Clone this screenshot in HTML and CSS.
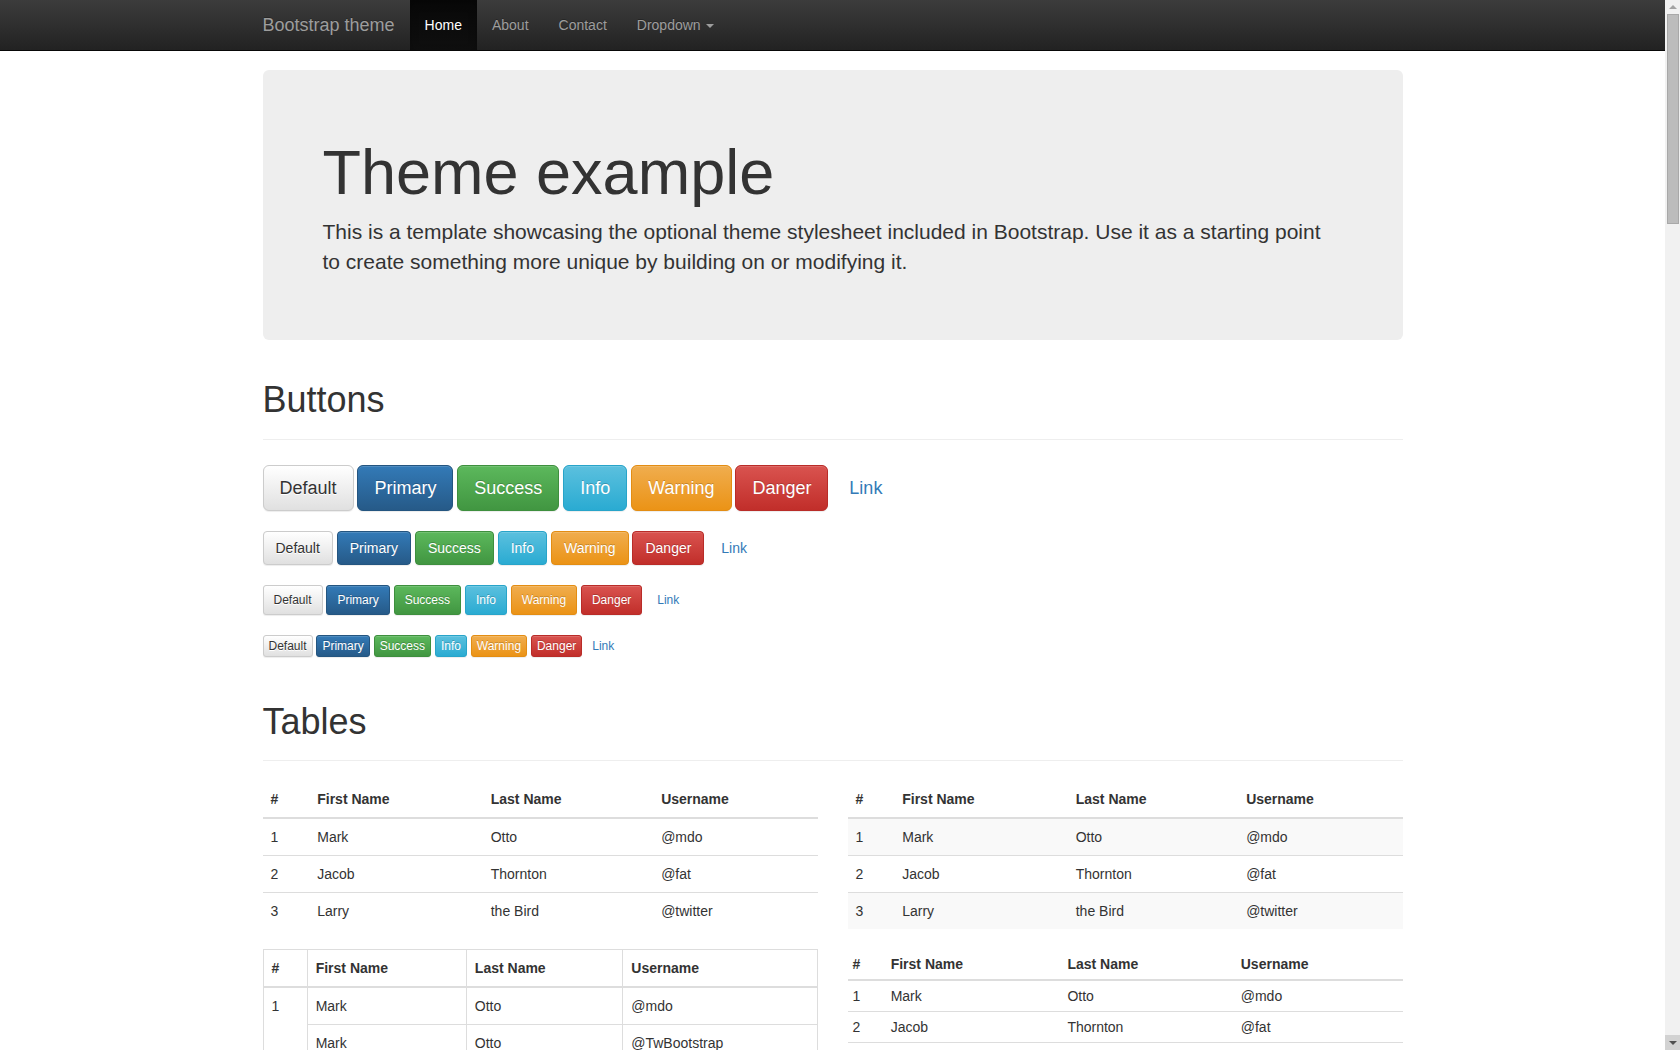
FILE: index.html
```html
<!DOCTYPE html>
<html lang="en">
<head>
<meta charset="utf-8">
<title>Theme Template for Bootstrap</title>
<link rel="stylesheet" href="styles.css">
</head>
<body>
<nav class="navbar navbar-inverse navbar-fixed">
  <div class="container nav-inner">
    <a class="navbar-brand" href="#">Bootstrap theme</a>
    <ul class="navbar-nav">
      <li class="active"><a href="#">Home</a></li>
      <li><a href="#about">About</a></li>
      <li><a href="#contact">Contact</a></li>
      <li><a href="#">Dropdown <span class="caret"></span></a></li>
    </ul>
  </div>
</nav>

<div class="fake-scrollbar" aria-hidden="true">
  <div class="sb-btn sb-up"><span class="sb-tri-up"></span></div>
  <div class="sb-thumb"></div>
  <div class="sb-track"></div>
  <div class="sb-btn sb-down"><span class="sb-tri-down"></span></div>
</div>

<div class="container theme-showcase">
  <div class="jumbotron">
    <h1>Theme example</h1>
    <p>This is a template showcasing the optional theme stylesheet included in Bootstrap. Use it as a starting point to create something more unique by building on or modifying it.</p>
  </div>

  <div class="page-header"><h1>Buttons</h1></div>
  <p class="btn-row">
    <button type="button" class="btn btn-lg btn-default">Default</button>
    <button type="button" class="btn btn-lg btn-primary">Primary</button>
    <button type="button" class="btn btn-lg btn-success">Success</button>
    <button type="button" class="btn btn-lg btn-info">Info</button>
    <button type="button" class="btn btn-lg btn-warning">Warning</button>
    <button type="button" class="btn btn-lg btn-danger">Danger</button>
    <button type="button" class="btn btn-lg btn-link">Link</button>
  </p>
  <p class="btn-row">
    <button type="button" class="btn btn-default">Default</button>
    <button type="button" class="btn btn-primary">Primary</button>
    <button type="button" class="btn btn-success">Success</button>
    <button type="button" class="btn btn-info">Info</button>
    <button type="button" class="btn btn-warning">Warning</button>
    <button type="button" class="btn btn-danger">Danger</button>
    <button type="button" class="btn btn-link">Link</button>
  </p>
  <p class="btn-row">
    <button type="button" class="btn btn-sm btn-default">Default</button>
    <button type="button" class="btn btn-sm btn-primary">Primary</button>
    <button type="button" class="btn btn-sm btn-success">Success</button>
    <button type="button" class="btn btn-sm btn-info">Info</button>
    <button type="button" class="btn btn-sm btn-warning">Warning</button>
    <button type="button" class="btn btn-sm btn-danger">Danger</button>
    <button type="button" class="btn btn-sm btn-link">Link</button>
  </p>
  <p class="btn-row">
    <button type="button" class="btn btn-xs btn-default">Default</button>
    <button type="button" class="btn btn-xs btn-primary">Primary</button>
    <button type="button" class="btn btn-xs btn-success">Success</button>
    <button type="button" class="btn btn-xs btn-info">Info</button>
    <button type="button" class="btn btn-xs btn-warning">Warning</button>
    <button type="button" class="btn btn-xs btn-danger">Danger</button>
    <button type="button" class="btn btn-xs btn-link">Link</button>
  </p>

  <div class="page-header"><h1>Tables</h1></div>
  <div class="row">
    <div class="col-6">
      <table class="table">
        <thead><tr><th>#</th><th>First Name</th><th>Last Name</th><th>Username</th></tr></thead>
        <tbody>
          <tr><td>1</td><td>Mark</td><td>Otto</td><td>@mdo</td></tr>
          <tr><td>2</td><td>Jacob</td><td>Thornton</td><td>@fat</td></tr>
          <tr><td>3</td><td>Larry</td><td>the Bird</td><td>@twitter</td></tr>
        </tbody>
      </table>
    </div>
    <div class="col-6">
      <table class="table table-striped">
        <thead><tr><th>#</th><th>First Name</th><th>Last Name</th><th>Username</th></tr></thead>
        <tbody>
          <tr><td>1</td><td>Mark</td><td>Otto</td><td>@mdo</td></tr>
          <tr><td>2</td><td>Jacob</td><td>Thornton</td><td>@fat</td></tr>
          <tr><td>3</td><td>Larry</td><td>the Bird</td><td>@twitter</td></tr>
        </tbody>
      </table>
    </div>
  </div>
  <div class="row">
    <div class="col-6">
      <table class="table table-bordered">
        <thead><tr><th>#</th><th>First Name</th><th>Last Name</th><th>Username</th></tr></thead>
        <tbody>
          <tr><td rowspan="2">1</td><td>Mark</td><td>Otto</td><td>@mdo</td></tr>
          <tr><td>Mark</td><td>Otto</td><td>@TwBootstrap</td></tr>
          <tr><td>2</td><td>Jacob</td><td>Thornton</td><td>@fat</td></tr>
          <tr><td>3</td><td colspan="2">Larry the Bird</td><td>@twitter</td></tr>
        </tbody>
      </table>
    </div>
    <div class="col-6">
      <table class="table table-condensed">
        <thead><tr><th>#</th><th>First Name</th><th>Last Name</th><th>Username</th></tr></thead>
        <tbody>
          <tr><td>1</td><td>Mark</td><td>Otto</td><td>@mdo</td></tr>
          <tr><td>2</td><td>Jacob</td><td>Thornton</td><td>@fat</td></tr>
          <tr><td>3</td><td colspan="2">Larry the Bird</td><td>@twitter</td></tr>
        </tbody>
      </table>
    </div>
  </div>

  <div class="page-header"><h1>Thumbnails</h1></div>
  <div class="img-thumbnail"><div class="holder">200x200</div></div>

  <div class="page-header"><h1>Labels</h1></div>
  <h1 class="lbl-h">
    <span class="label label-default">Default</span>
    <span class="label label-primary">Primary</span>
    <span class="label label-success">Success</span>
    <span class="label label-info">Info</span>
    <span class="label label-warning">Warning</span>
    <span class="label label-danger">Danger</span>
  </h1>
  <h2 class="lbl-h">
    <span class="label label-default">Default</span>
    <span class="label label-primary">Primary</span>
    <span class="label label-success">Success</span>
    <span class="label label-info">Info</span>
    <span class="label label-warning">Warning</span>
    <span class="label label-danger">Danger</span>
  </h2>
  <h3 class="lbl-h">
    <span class="label label-default">Default</span>
    <span class="label label-primary">Primary</span>
    <span class="label label-success">Success</span>
    <span class="label label-info">Info</span>
    <span class="label label-warning">Warning</span>
    <span class="label label-danger">Danger</span>
  </h3>
  <h4 class="lbl-h">
    <span class="label label-default">Default</span>
    <span class="label label-primary">Primary</span>
    <span class="label label-success">Success</span>
    <span class="label label-info">Info</span>
    <span class="label label-warning">Warning</span>
    <span class="label label-danger">Danger</span>
  </h4>
  <h5 class="lbl-h">
    <span class="label label-default">Default</span>
    <span class="label label-primary">Primary</span>
    <span class="label label-success">Success</span>
    <span class="label label-info">Info</span>
    <span class="label label-warning">Warning</span>
    <span class="label label-danger">Danger</span>
  </h5>
  <h6 class="lbl-h">
    <span class="label label-default">Default</span>
    <span class="label label-primary">Primary</span>
    <span class="label label-success">Success</span>
    <span class="label label-info">Info</span>
    <span class="label label-warning">Warning</span>
    <span class="label label-danger">Danger</span>
  </h6>

  <div class="page-header"><h1>Badges</h1></div>
  <p><a href="#" class="link">Inbox <span class="badge">42</span></a></p>
  <ul class="nav nav-pills">
    <li class="active"><a href="#">Home <span class="badge">42</span></a></li>
    <li><a href="#">Profile</a></li>
    <li><a href="#">Messages <span class="badge">3</span></a></li>
  </ul>

  <div class="page-header"><h1>Dropdown menus</h1></div>
  <div class="theme-dropdown">
    <ul class="dropdown-menu">
      <li class="active"><a href="#">Action</a></li>
      <li><a href="#">Another action</a></li>
      <li><a href="#">Something else here</a></li>
      <li class="divider"></li>
      <li><a href="#">Separated link</a></li>
    </ul>
  </div>

  <div class="page-header"><h1>Navs</h1></div>
  <ul class="nav nav-tabs">
    <li class="active"><a href="#">Home</a></li>
    <li><a href="#">Profile</a></li>
    <li><a href="#">Messages</a></li>
  </ul>
  <ul class="nav nav-pills">
    <li class="active"><a href="#">Home</a></li>
    <li><a href="#">Profile</a></li>
    <li><a href="#">Messages</a></li>
  </ul>

  <div class="page-header"><h1>Navbars</h1></div>
  <nav class="navbar navbar-default navbar-box">
    <div class="nav-inner">
      <a class="navbar-brand" href="#">Project name</a>
      <ul class="navbar-nav">
        <li class="active"><a href="#">Home</a></li>
        <li><a href="#">About</a></li>
        <li><a href="#">Contact</a></li>
        <li><a href="#">Dropdown <span class="caret"></span></a></li>
      </ul>
    </div>
  </nav>
  <nav class="navbar navbar-inverse navbar-box">
    <div class="nav-inner">
      <a class="navbar-brand" href="#">Project name</a>
      <ul class="navbar-nav">
        <li class="active"><a href="#">Home</a></li>
        <li><a href="#">About</a></li>
        <li><a href="#">Contact</a></li>
        <li><a href="#">Dropdown <span class="caret"></span></a></li>
      </ul>
    </div>
  </nav>

  <div class="page-header"><h1>Alerts</h1></div>
  <div class="alert alert-success"><strong>Well done!</strong> You successfully read this important alert message.</div>
  <div class="alert alert-info"><strong>Heads up!</strong> This alert needs your attention, but it's not super important.</div>
  <div class="alert alert-warning"><strong>Warning!</strong> Best check yo self, you're not looking too good.</div>
  <div class="alert alert-danger"><strong>Oh snap!</strong> Change a few things up and try submitting again.</div>

  <div class="page-header"><h1>Progress bars</h1></div>
  <div class="progress"><div class="progress-bar" style="width: 60%"><span class="sr-only">60% Complete</span></div></div>
  <div class="progress"><div class="progress-bar progress-bar-success" style="width: 40%"><span class="sr-only">40% Complete (success)</span></div></div>
  <div class="progress"><div class="progress-bar progress-bar-info" style="width: 20%"><span class="sr-only">20% Complete</span></div></div>
  <div class="progress"><div class="progress-bar progress-bar-warning" style="width: 60%"><span class="sr-only">60% Complete (warning)</span></div></div>
  <div class="progress"><div class="progress-bar progress-bar-danger" style="width: 80%"><span class="sr-only">80% Complete (danger)</span></div></div>
  <div class="progress">
    <div class="progress-bar progress-bar-success" style="width: 35%"><span class="sr-only">35% Complete (success)</span></div>
    <div class="progress-bar progress-bar-warning" style="width: 20%"><span class="sr-only">20% Complete (warning)</span></div>
    <div class="progress-bar progress-bar-danger" style="width: 10%"><span class="sr-only">10% Complete (danger)</span></div>
  </div>

  <div class="page-header"><h1>List groups</h1></div>
  <div class="row">
    <div class="col-4">
      <ul class="list-group">
        <li class="list-group-item">Cras justo odio</li>
        <li class="list-group-item">Dapibus ac facilisis in</li>
        <li class="list-group-item">Morbi leo risus</li>
        <li class="list-group-item">Porta ac consectetur ac</li>
        <li class="list-group-item">Vestibulum at eros</li>
      </ul>
    </div>
    <div class="col-4">
      <div class="list-group">
        <a href="#" class="list-group-item active">Cras justo odio</a>
        <a href="#" class="list-group-item">Dapibus ac facilisis in</a>
        <a href="#" class="list-group-item">Morbi leo risus</a>
        <a href="#" class="list-group-item">Porta ac consectetur ac</a>
        <a href="#" class="list-group-item">Vestibulum at eros</a>
      </div>
    </div>
    <div class="col-4">
      <div class="list-group">
        <a href="#" class="list-group-item active">
          <h4 class="list-group-item-heading">List group item heading</h4>
          <p class="list-group-item-text">Donec id elit non mi porta gravida at eget metus. Maecenas sed diam eget risus varius blandit.</p>
        </a>
        <a href="#" class="list-group-item">
          <h4 class="list-group-item-heading">List group item heading</h4>
          <p class="list-group-item-text">Donec id elit non mi porta gravida at eget metus. Maecenas sed diam eget risus varius blandit.</p>
        </a>
        <a href="#" class="list-group-item">
          <h4 class="list-group-item-heading">List group item heading</h4>
          <p class="list-group-item-text">Donec id elit non mi porta gravida at eget metus. Maecenas sed diam eget risus varius blandit.</p>
        </a>
      </div>
    </div>
  </div>

  <div class="page-header"><h1>Panels</h1></div>
  <div class="row">
    <div class="col-4">
      <div class="panel panel-default"><div class="panel-heading"><h3 class="panel-title">Panel title</h3></div><div class="panel-body">Panel content</div></div>
      <div class="panel panel-primary"><div class="panel-heading"><h3 class="panel-title">Panel title</h3></div><div class="panel-body">Panel content</div></div>
    </div>
    <div class="col-4">
      <div class="panel panel-success"><div class="panel-heading"><h3 class="panel-title">Panel title</h3></div><div class="panel-body">Panel content</div></div>
      <div class="panel panel-info"><div class="panel-heading"><h3 class="panel-title">Panel title</h3></div><div class="panel-body">Panel content</div></div>
    </div>
    <div class="col-4">
      <div class="panel panel-warning"><div class="panel-heading"><h3 class="panel-title">Panel title</h3></div><div class="panel-body">Panel content</div></div>
      <div class="panel panel-danger"><div class="panel-heading"><h3 class="panel-title">Panel title</h3></div><div class="panel-body">Panel content</div></div>
    </div>
  </div>

  <div class="page-header"><h1>Wells</h1></div>
  <div class="well">
    <p>Sed diam eget risus varius blandit sit amet non magna. Maecenas faucibus mollis interdum. Donec ullamcorper nulla non metus auctor fringilla. Aenean lacinia bibendum nulla sed consectetur.</p>
  </div>

  <div class="page-header"><h1>Carousel</h1></div>
  <div class="carousel">
    <div class="carousel-slide">First slide</div>
    <ol class="carousel-indicators">
      <li class="active"></li><li></li><li></li>
    </ol>
    <a class="carousel-control left" href="#">&#8249;</a>
    <a class="carousel-control right" href="#">&#8250;</a>
  </div>
</div>
</body>
</html>
```

FILE: styles.css
```css
* { box-sizing: border-box; }
html { font-size: 10px; }
body {
  margin: 0;
  padding-top: 70px;
  padding-bottom: 30px;
  padding-right: 15px;
  font-family: "Liberation Sans", Arial, sans-serif;
  font-size: 14px;
  line-height: 1.42857143;
  color: #333;
  background: #fff;
}
a { color: #337ab7; text-decoration: none; }
h1, h2, h3, h4, h5, h6 { font-family: inherit; font-weight: 500; line-height: 1.1; color: inherit; }
h1, h2, h3 { margin-top: 20px; margin-bottom: 10px; }
h4, h5, h6 { margin-top: 10px; margin-bottom: 10px; }
h1 { font-size: 36px; }
h2 { font-size: 30px; }
h3 { font-size: 24px; }
h4 { font-size: 18px; }
h5 { font-size: 14px; }
h6 { font-size: 12px; }
p { margin: 0 0 10px; }
ul, ol { margin: 0; padding: 0; list-style: none; }

.container { width: 1170px; margin: 0 auto; padding: 0 15px; }
.row { display: flex; margin: 0 -15px; }
.col-6 { width: 50%; padding: 0 15px; }
.col-4 { width: 33.3333%; padding: 0 15px; }

/* Browser scrollbar as seen in the screenshot */
.fake-scrollbar {
  position: fixed;
  top: 0; right: 0; bottom: 0;
  width: 15px;
  z-index: 2000;
  background: #f1f1f1;
  display: flex;
  flex-direction: column;
}
.sb-btn { height: 15px; flex: none; display: flex; align-items: center; justify-content: center; }
.sb-up { height: 14px; }
.sb-down { background: #d2d2d2; }
.sb-tri-up {
  width: 0; height: 0;
  border-left: 4px solid transparent;
  border-right: 4px solid transparent;
  border-bottom: 4px solid #a3a3a3;
}
.sb-tri-down {
  width: 0; height: 0;
  border-left: 4px solid transparent;
  border-right: 4px solid transparent;
  border-top: 4px solid #505050;
}
.sb-thumb {
  flex: none;
  height: 210px;
  margin: 0 1px 0 2px;
  background: #bcbcbc;
  border: 1px solid #a8a8a8;
}
.sb-track { flex: 1; }

/* Navbar */
.navbar { min-height: 50px; border: 1px solid transparent; }
.navbar-fixed {
  position: fixed; top: 0; left: 0; right: 0; z-index: 1030;
  border-width: 0 0 1px;
  padding-right: 15px;
}
.nav-inner { display: flex; align-items: flex-start; }
.navbar-brand {
  display: block;
  height: 50px;
  padding: 15px;
  margin-left: -15px;
  font-size: 18px;
  line-height: 20px;
}
.navbar-nav { display: flex; }
.navbar-nav > li > a { display: block; padding: 15px; line-height: 20px; }
.navbar-inverse {
  background-color: #222;
  background-image: linear-gradient(to bottom, #3c3c3c 0, #222 100%);
  border-color: #080808;
}
.navbar-inverse .navbar-brand,
.navbar-inverse .navbar-nav > li > a { color: #9d9d9d; text-shadow: 0 -1px 0 rgba(0,0,0,.25); }
.navbar-inverse .navbar-nav > .active > a {
  color: #fff;
  background-image: linear-gradient(to bottom, #080808 0, #0f0f0f 100%);
  box-shadow: inset 0 3px 9px rgba(0,0,0,.25);
}
.navbar-default {
  background-image: linear-gradient(to bottom, #fff 0, #f8f8f8 100%);
  border-color: #e7e7e7;
  box-shadow: inset 0 1px 0 rgba(255,255,255,.15), 0 1px 5px rgba(0,0,0,.075);
}
.navbar-default .navbar-brand { color: #777; text-shadow: 0 1px 0 rgba(255,255,255,.25); }
.navbar-default .navbar-nav > li > a { color: #777; text-shadow: 0 1px 0 rgba(255,255,255,.25); }
.navbar-default .navbar-nav > .active > a {
  color: #555;
  background-image: linear-gradient(to bottom, #dbdbdb 0, #e2e2e2 100%);
  box-shadow: inset 0 3px 9px rgba(0,0,0,.075);
}
.navbar-box { border-radius: 4px; margin-bottom: 20px; padding: 0 15px; }
.navbar-box .navbar-brand { margin-left: -15px; }
.caret {
  display: inline-block;
  width: 0; height: 0;
  margin-left: 2px;
  vertical-align: middle;
  border-top: 4px solid;
  border-right: 4px solid transparent;
  border-left: 4px solid transparent;
}

/* Jumbotron */
.jumbotron {
  padding: 48px 60px;
  margin-bottom: 30px;
  color: inherit;
  background-color: #eee;
  border-radius: 6px;
}
.jumbotron h1 { font-size: 63px; margin: 20px 0 10px; }
.jumbotron p { font-size: 21px; font-weight: 200; margin-bottom: 15px; line-height: 30px; }

/* Page header */
.page-header { padding-bottom: 9px; margin: 40px 0 20px; border-bottom: 1px solid #eee; }

/* Buttons */
.btn {
  display: inline-block;
  margin: 0;
  font-family: inherit;
  font-weight: 400;
  text-align: center;
  white-space: nowrap;
  vertical-align: middle;
  cursor: pointer;
  border: 1px solid transparent;
  padding: 6px 12px;
  font-size: 14px;
  line-height: 1.42857143;
  border-radius: 4px;
  background-repeat: repeat-x;
  color: #fff;
  text-shadow: 0 -1px 0 rgba(0,0,0,.2);
  box-shadow: inset 0 1px 0 rgba(255,255,255,.15), 0 1px 1px rgba(0,0,0,.075);
}
.btn-row > .btn { margin: 5px 0; }
.btn-lg { padding: 10px 16px; font-size: 18px; line-height: 1.3333333; border-radius: 6px; }
.btn-sm { padding: 5px 10px; font-size: 12px; line-height: 1.5; border-radius: 3px; }
.btn-xs { padding: 1px 5px; font-size: 12px; line-height: 1.5; border-radius: 3px; }
.btn-default {
  color: #333;
  text-shadow: 0 1px 0 #fff;
  background-color: #e0e0e0;
  background-image: linear-gradient(to bottom, #fff 0, #e0e0e0 100%);
  border-color: #ccc;
}
.btn-primary {
  background-color: #265a88;
  background-image: linear-gradient(to bottom, #337ab7 0, #265a88 100%);
  border-color: #245580;
}
.btn-success {
  background-color: #419641;
  background-image: linear-gradient(to bottom, #5cb85c 0, #419641 100%);
  border-color: #3e8f3e;
}
.btn-info {
  background-color: #2aabd2;
  background-image: linear-gradient(to bottom, #5bc0de 0, #2aabd2 100%);
  border-color: #28a4c9;
}
.btn-warning {
  background-color: #eb9316;
  background-image: linear-gradient(to bottom, #f0ad4e 0, #eb9316 100%);
  border-color: #e38d13;
}
.btn-danger {
  background-color: #c12e2a;
  background-image: linear-gradient(to bottom, #d9534f 0, #c12e2a 100%);
  border-color: #b92c28;
}
.btn-link {
  color: #337ab7;
  background: transparent;
  border-color: transparent;
  box-shadow: none;
  text-shadow: none;
}

/* Tables */
.table { width: 100%; max-width: 100%; margin-bottom: 20px; border-collapse: collapse; border-spacing: 0; background-color: transparent; }
.table th, .table td {
  padding: 8px;
  line-height: 1.42857143;
  vertical-align: top;
  border-top: 1px solid #ddd;
  text-align: left;
}
.table th { font-weight: 700; }
.table thead th { vertical-align: bottom; border-bottom: 2px solid #ddd; border-top: 0; }
.table-striped tbody tr:nth-of-type(odd) { background-color: #f9f9f9; }
.table-bordered { border: 1px solid #ddd; }
.table-bordered th, .table-bordered td { border: 1px solid #ddd; }
.table-bordered thead th { border-bottom-width: 2px; border-top: 0; }
.table-condensed th, .table-condensed td { padding: 5px; }

/* Thumbnails */
.img-thumbnail {
  display: inline-block;
  padding: 4px;
  line-height: 1.42857143;
  background-color: #fff;
  border: 1px solid #ddd;
  border-radius: 4px;
}
.holder {
  width: 200px; height: 200px;
  background: #eee;
  color: #aaa;
  font-size: 13px;
  font-weight: 700;
  display: flex; align-items: center; justify-content: center;
}

/* Labels */
.label {
  display: inline;
  padding: .2em .6em .3em;
  font-size: 75%;
  font-weight: 700;
  line-height: 1;
  color: #fff;
  text-align: center;
  white-space: nowrap;
  vertical-align: baseline;
  border-radius: .25em;
}
.label-default { background-color: #777; }
.label-primary { background-color: #337ab7; }
.label-success { background-color: #5cb85c; }
.label-info { background-color: #5bc0de; }
.label-warning { background-color: #f0ad4e; }
.label-danger { background-color: #d9534f; }

/* Badges */
.badge {
  display: inline-block;
  min-width: 10px;
  padding: 3px 7px;
  font-size: 12px;
  font-weight: 700;
  line-height: 1;
  color: #fff;
  text-align: center;
  white-space: nowrap;
  vertical-align: middle;
  background-color: #777;
  border-radius: 10px;
}
.nav { display: flex; margin-bottom: 0; }
.nav > li > a { display: block; padding: 10px 15px; }
.nav-pills > li + li { margin-left: 2px; }
.nav-pills > li > a { border-radius: 4px; }
.nav-pills > li.active > a { color: #fff; background-color: #337ab7; }
.nav-pills > .active > a > .badge { color: #337ab7; background-color: #fff; }
.nav-tabs { border-bottom: 1px solid #ddd; margin-bottom: 20px; }
.nav-tabs > li { margin-bottom: -1px; }
.nav-tabs > li > a { margin-right: 2px; border: 1px solid transparent; border-radius: 4px 4px 0 0; }
.nav-tabs > li.active > a { color: #555; background: #fff; border-color: #ddd #ddd transparent; }

/* Dropdown */
.theme-dropdown { margin-bottom: 20px; }
.dropdown-menu {
  display: inline-block;
  min-width: 160px;
  padding: 5px 0;
  margin: 2px 0 20px;
  font-size: 14px;
  background-color: #fff;
  border: 1px solid rgba(0,0,0,.15);
  border-radius: 4px;
  box-shadow: 0 6px 12px rgba(0,0,0,.175);
}
.dropdown-menu > li > a { display: block; padding: 3px 20px; line-height: 1.42857143; color: #333; white-space: nowrap; }
.dropdown-menu > .active > a { color: #fff; background-image: linear-gradient(to bottom, #337ab7 0, #2e6da4 100%); }
.dropdown-menu .divider { height: 1px; margin: 9px 0; background-color: #e5e5e5; }

/* Alerts */
.alert {
  padding: 15px;
  margin-bottom: 20px;
  border: 1px solid transparent;
  border-radius: 4px;
  text-shadow: 0 1px 0 rgba(255,255,255,.2);
  box-shadow: inset 0 1px 0 rgba(255,255,255,.25), 0 1px 2px rgba(0,0,0,.05);
}
.alert-success { color: #3c763d; background-image: linear-gradient(to bottom, #dff0d8 0, #c8e5bc 100%); border-color: #b2dba1; }
.alert-info { color: #31708f; background-image: linear-gradient(to bottom, #d9edf7 0, #b9def0 100%); border-color: #9acfea; }
.alert-warning { color: #8a6d3b; background-image: linear-gradient(to bottom, #fcf8e3 0, #f8efc0 100%); border-color: #f5e79e; }
.alert-danger { color: #a94442; background-image: linear-gradient(to bottom, #f2dede 0, #e7c3c3 100%); border-color: #dca7a7; }

/* Progress */
.progress {
  display: flex;
  height: 20px;
  margin-bottom: 20px;
  overflow: hidden;
  border-radius: 4px;
  background-image: linear-gradient(to bottom, #ebebeb 0, #f5f5f5 100%);
  box-shadow: inset 0 1px 2px rgba(0,0,0,.1);
}
.progress-bar { height: 100%; background-image: linear-gradient(to bottom, #337ab7 0, #286090 100%); box-shadow: inset 0 -1px 0 rgba(0,0,0,.15); }
.progress-bar-success { background-image: linear-gradient(to bottom, #5cb85c 0, #449d44 100%); }
.progress-bar-info { background-image: linear-gradient(to bottom, #5bc0de 0, #31b0d5 100%); }
.progress-bar-warning { background-image: linear-gradient(to bottom, #f0ad4e 0, #ec971f 100%); }
.progress-bar-danger { background-image: linear-gradient(to bottom, #d9534f 0, #c9302c 100%); }
.sr-only { position: absolute; width: 1px; height: 1px; margin: -1px; padding: 0; overflow: hidden; clip: rect(0,0,0,0); border: 0; }

/* List groups */
.list-group { display: block; margin-bottom: 20px; border-radius: 4px; box-shadow: 0 1px 2px rgba(0,0,0,.075); }
.list-group-item {
  display: block;
  padding: 10px 15px;
  margin-bottom: -1px;
  background-color: #fff;
  border: 1px solid #ddd;
  color: #555;
}
.list-group-item:first-child { border-top-left-radius: 4px; border-top-right-radius: 4px; }
.list-group-item:last-child { margin-bottom: 0; border-bottom-left-radius: 4px; border-bottom-right-radius: 4px; }
.list-group-item.active {
  color: #fff;
  text-shadow: 0 -1px 0 #286090;
  background-image: linear-gradient(to bottom, #337ab7 0, #2b669a 100%);
  border-color: #2b669a;
}
.list-group-item-heading { margin: 0 0 5px; color: #333; }
.list-group-item.active .list-group-item-heading { color: #fff; }
.list-group-item-text { margin-bottom: 0; line-height: 1.3; }
.list-group-item.active .list-group-item-text { color: #c7ddef; }

/* Panels */
.panel { margin-bottom: 20px; background-color: #fff; border: 1px solid transparent; border-radius: 4px; box-shadow: 0 1px 2px rgba(0,0,0,.05); }
.panel-heading { padding: 10px 15px; border-bottom: 1px solid transparent; border-top-left-radius: 3px; border-top-right-radius: 3px; }
.panel-title { margin: 0; font-size: 16px; }
.panel-body { padding: 15px; }
.panel-default { border-color: #ddd; }
.panel-default > .panel-heading { color: #333; border-color: #ddd; background-image: linear-gradient(to bottom, #f5f5f5 0, #e8e8e8 100%); }
.panel-primary { border-color: #337ab7; }
.panel-primary > .panel-heading { color: #fff; border-color: #337ab7; background-image: linear-gradient(to bottom, #337ab7 0, #2e6da4 100%); }
.panel-success { border-color: #d6e9c6; }
.panel-success > .panel-heading { color: #3c763d; border-color: #d6e9c6; background-image: linear-gradient(to bottom, #dff0d8 0, #d0e9c6 100%); }
.panel-info { border-color: #bce8f1; }
.panel-info > .panel-heading { color: #31708f; border-color: #bce8f1; background-image: linear-gradient(to bottom, #d9edf7 0, #c4e3f3 100%); }
.panel-warning { border-color: #faebcc; }
.panel-warning > .panel-heading { color: #8a6d3b; border-color: #faebcc; background-image: linear-gradient(to bottom, #fcf8e3 0, #faf2cc 100%); }
.panel-danger { border-color: #ebccd1; }
.panel-danger > .panel-heading { color: #a94442; border-color: #ebccd1; background-image: linear-gradient(to bottom, #f2dede 0, #ebcccc 100%); }

/* Wells */
.well {
  min-height: 20px;
  padding: 19px;
  margin-bottom: 20px;
  border: 1px solid #dcdcdc;
  border-radius: 4px;
  background-image: linear-gradient(to bottom, #e8e8e8 0, #f5f5f5 100%);
  box-shadow: inset 0 1px 3px rgba(0,0,0,.05), 0 1px 0 rgba(255,255,255,.1);
}

/* Carousel */
.carousel { position: relative; }
.carousel-slide {
  height: 500px;
  background: #777;
  color: #555;
  font-size: 70px;
  font-weight: 700;
  display: flex; align-items: center; justify-content: center;
}
.carousel-indicators {
  position: absolute; bottom: 10px; left: 50%;
  transform: translateX(-50%);
  display: flex; gap: 4px;
}
.carousel-indicators li { width: 10px; height: 10px; border: 1px solid #fff; border-radius: 10px; }
.carousel-indicators li.active { width: 12px; height: 12px; background: #fff; }
.carousel-control {
  position: absolute; top: 0; bottom: 0; width: 15%;
  display: flex; align-items: center; justify-content: center;
  font-size: 40px; color: #fff; opacity: .5;
  text-shadow: 0 1px 2px rgba(0,0,0,.6);
}
.carousel-control.left { left: 0; background-image: linear-gradient(to right, rgba(0,0,0,.5) 0, rgba(0,0,0,.0001) 100%); }
.carousel-control.right { right: 0; background-image: linear-gradient(to right, rgba(0,0,0,.0001) 0, rgba(0,0,0,.5) 100%); }
```
